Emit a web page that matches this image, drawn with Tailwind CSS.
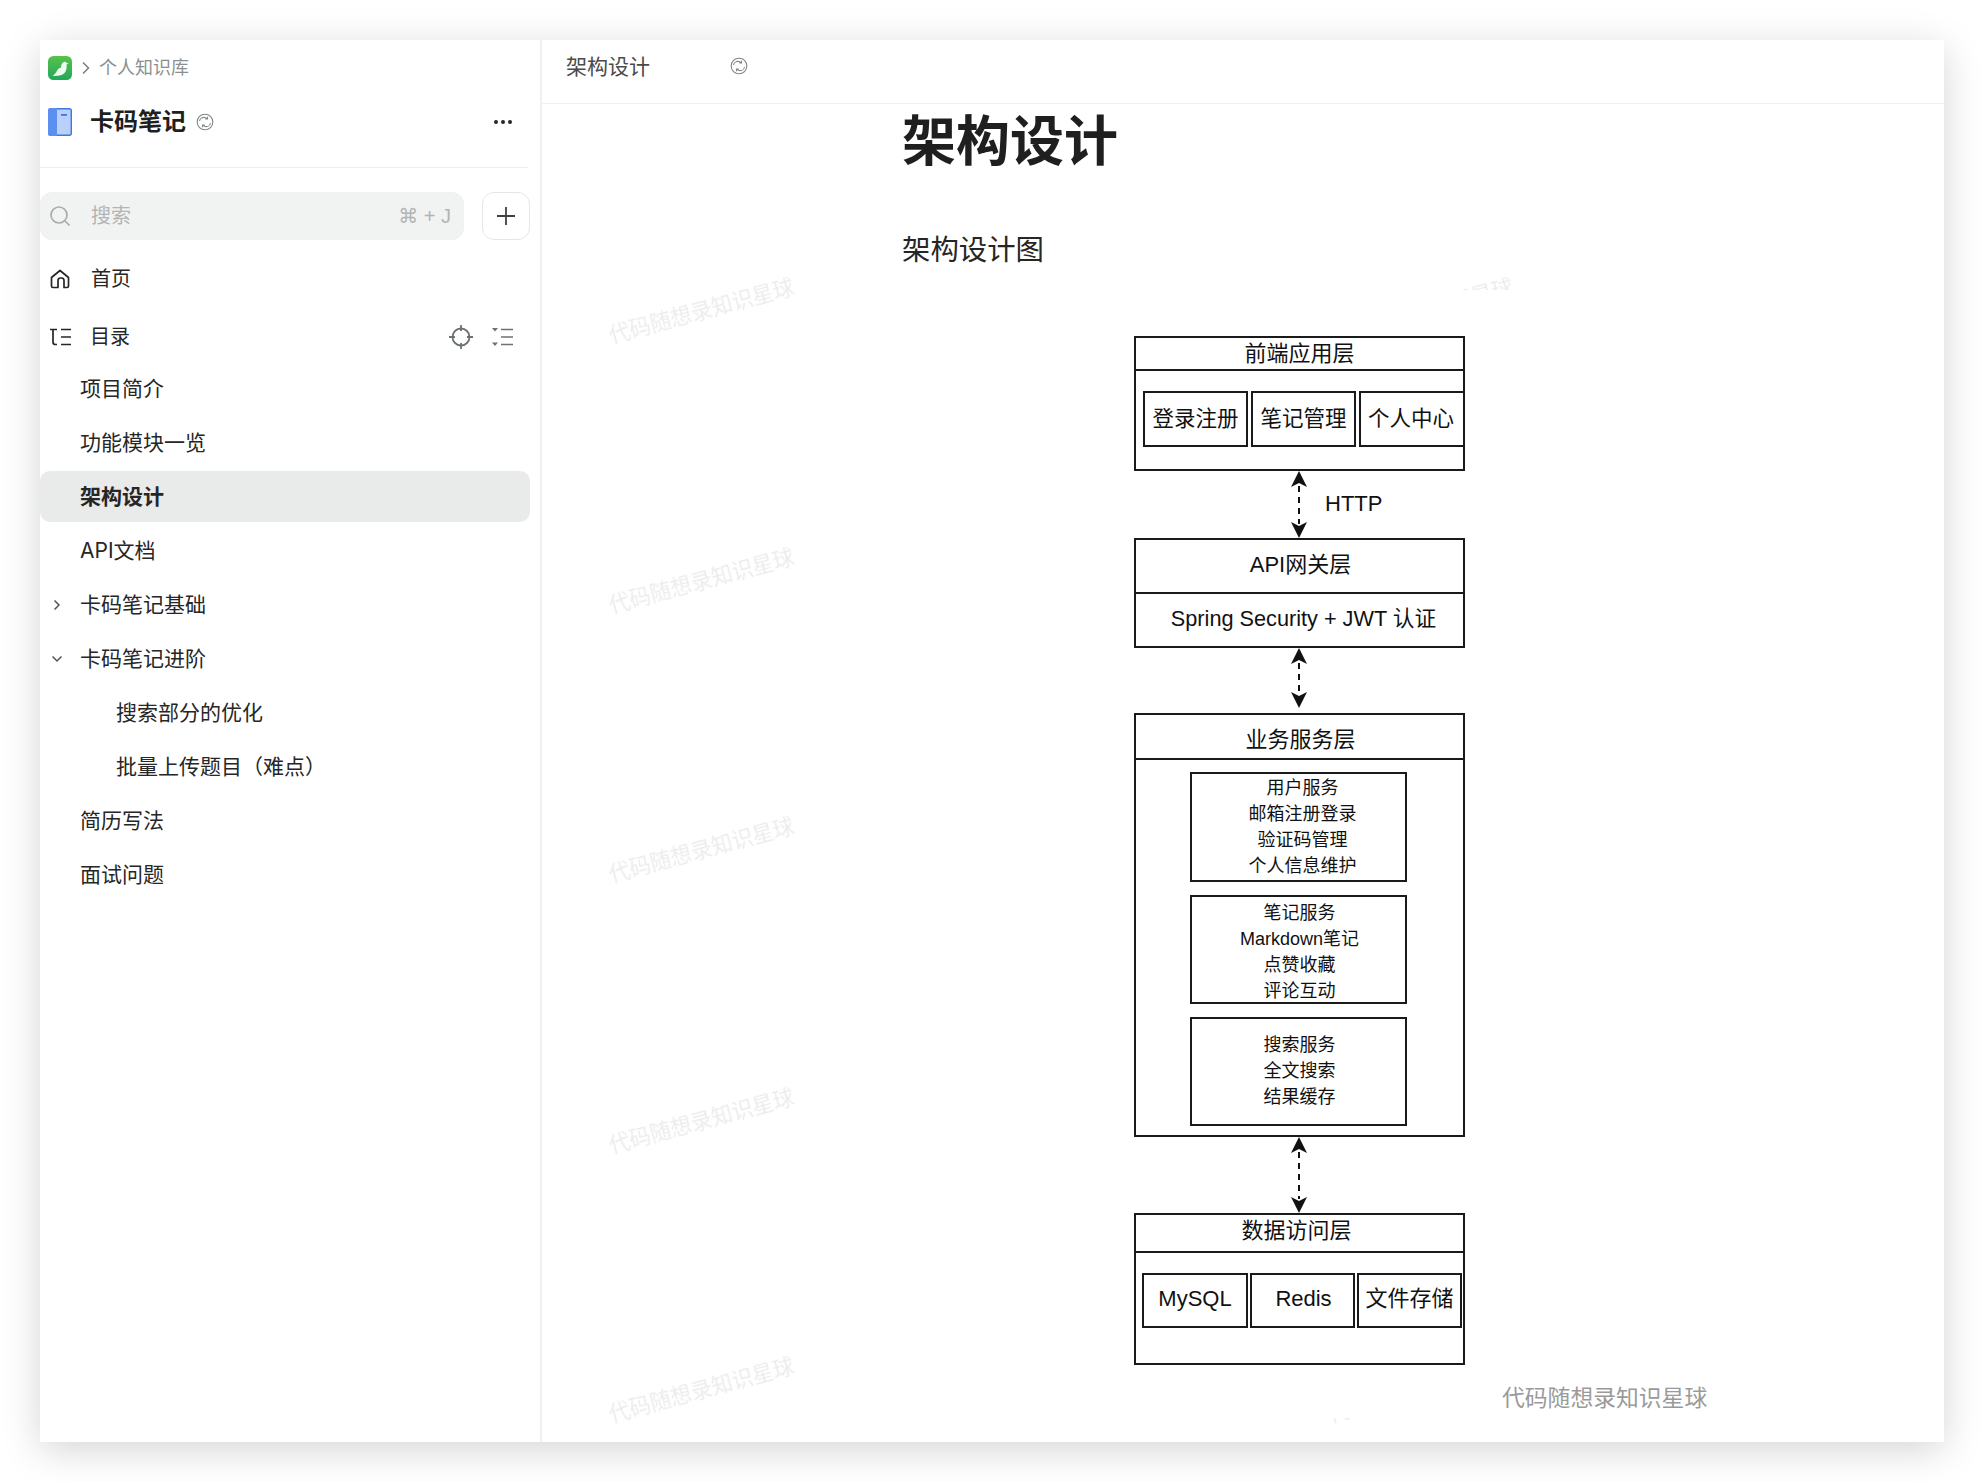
<!DOCTYPE html>
<html lang="zh-CN">
<head>
<meta charset="utf-8">
<title>架构设计</title>
<script src="https://cdn.jsdelivr.net/npm/@tailwindcss/browser@4"></script>
</head>
<body class="bg-white">
<div class="w-[1984px] h-[1482px] overflow-hidden p-[40px] pb-[40px] bg-white font-['Inter','Noto_Sans_CJK_SC',sans-serif] text-[#262626]">
  <div class="relative w-[1904px] h-[1402px] flex bg-white shadow-[0_8px_36px_rgba(0,0,0,0.17)]">
    <!-- sidebar -->
    <aside class="w-[502px] shrink-0 h-full border-r-2 border-[#f0f0f0] bg-white flex flex-col">
      <div class="h-[24px] mt-[16px] ml-[8px] flex items-center">
        <svg class="w-[24px] h-[24px]" viewBox="0 0 24 24">
          <defs><linearGradient id="g" x1="0" y1="0" x2="0" y2="1"><stop offset="0" stop-color="#58c24a"/><stop offset="1" stop-color="#22a75a"/></linearGradient></defs>
          <rect width="24" height="24" rx="5.500" fill="url(#g)"/>
          <path d="M4.500 20c2-1.200 3.200-3 4.500-5.300 1-1.800 2.200-2.700 4-3.200 0-2.500 1-4.700 3-5.500 1-.4 1.900 0 2.200.8l2.300.5-2 1.100c.6 3.500-.2 7-2.500 9.200-2.700 2.400-7.500 2.600-11.500 2.400z" fill="#eefbf0"/>
        </svg>
        <svg class="w-[10px] h-[14px] ml-[9px]" viewBox="0 0 10 14" fill="none" stroke="#7c7c7c" stroke-width="1.500"><path d="M2 1.500 7.500 7 2 12.500"/></svg>
        <span class="ml-[8px] text-[18px] leading-[24px] text-[#8a8f8d]">个人知识库</span>
      </div>
      <div class="h-[28px] mt-[28px] ml-[8px] mr-[27px] flex items-center">
        <svg class="w-[24px] h-[28px]" viewBox="0 0 24 28">
          <rect x=".7" y=".7" width="22.600" height="26.600" rx="2" fill="#b8d0fb" stroke="#3f78d8" stroke-width="1.400"/>
          <path d="M2.500 0h6.500v28H2.500A2.500 2.500 0 0 1 0 25.500v-23A2.500 2.500 0 0 1 2.500 0z" fill="#5b8ff0"/>
          <rect x="13" y="6" width="6" height="1.800" fill="#3f78d8"/>
        </svg>
        <span class="ml-[18px] text-[24px] leading-[28px] font-bold text-[#1f1f1f]">卡码笔记</span>
        <svg class="w-[18px] h-[18px] ml-[10px]" viewBox="0 0 18 18" fill="none" stroke="#7f8584" stroke-width="1.100"><circle cx="9" cy="9" r="7.800"/><path d="M3.500 8C4 5.500 6.500 4 9 4.500l2.500 1.500M11.500 3.800V6H9.300M14.500 10c-.5 2.500-3 4-5.500 3.500L6.500 12M6.500 14.200V12h2.200"/></svg>
        <svg class="w-[20px] h-[6px] ml-auto" viewBox="0 0 20 6" fill="#262626"><circle cx="3" cy="3" r="2"/><circle cx="10" cy="3" r="2"/><circle cx="17" cy="3" r="2"/></svg>
      </div>
      <div class="h-[1px] bg-[#efefef] mt-[31px] mr-[12px]"></div>
      <div class="mt-[24px] flex gap-[18px] items-center">
        <div class="w-[424px] h-[48px] rounded-[12px] bg-[#f1f2f2] flex items-center pl-[9px] pr-[13px]">
          <svg class="w-[22px] h-[22px]" viewBox="0 0 22 22" fill="none" stroke="#a9adac" stroke-width="1.700"><circle cx="10" cy="10" r="8"/><path d="m16 16 4.500 4.500"/></svg>
          <span class="ml-[20px] text-[20px] text-[#b2b5b4]">搜索</span>
          <span class="ml-auto text-[20px] text-[#b2b5b4] font-['Liberation_Sans','DejaVu_Sans',sans-serif]">⌘ + J</span>
        </div>
        <div class="w-[48px] h-[48px] rounded-[12px] border border-[#e6e6e6] flex items-center justify-center">
          <svg class="w-[20px] h-[20px]" viewBox="0 0 20 20" stroke="#404040" stroke-width="1.800"><path d="M10 1v18M1 10h18"/></svg>
        </div>
      </div>
      <div class="h-[40px] mt-[19px] flex items-center pl-[10px]">
        <svg class="w-[20px] h-[20px]" viewBox="0 0 20 20" fill="none" stroke="#262626" stroke-width="1.700" stroke-linejoin="round"><path d="M1.500 8.500 10 1.500l8.500 7v8.500a1.500 1.500 0 0 1-1.500 1.500h-3V11.500a2.500 2.500 0 0 0-2.500-2.500h-1A2.500 2.500 0 0 0 8 11.500v7H3A1.500 1.500 0 0 1 1.500 17z"/></svg>
        <span class="ml-[21px] text-[20px] leading-[40px]">首页</span>
      </div>
      <div class="h-[40px] mt-[18px] flex items-center pl-[10px] pr-[27px]">
        <svg class="w-[21px] h-[18px]" viewBox="0 0 21 18" fill="none" stroke="#262626" stroke-width="1.700"><path d="M0 1.500h7M3 1.500V14a2.500 2.500 0 0 0 2.500 2.500H7M11 1.500h10M11 9h10M11 16.500h10"/></svg>
        <span class="ml-[19px] text-[20px] leading-[40px]">目录</span>
        <svg class="w-[24px] h-[24px] ml-auto -mt-[1px]" viewBox="0 0 24 24" fill="none" stroke="#6b7270" stroke-width="1.800"><circle cx="12" cy="12" r="8.500"/><path d="M12 0v6M12 18v6M0 12h6M18 12h6"/></svg>
        <svg class="w-[21px] h-[18px] ml-[19px] -mt-[1px]" viewBox="0 0 21 18" fill="none" stroke="#6b7270" stroke-width="1.700"><path d="M9 1.500h12M9 9h12M9 16.500h12"/><path d="M0 0h6L3 3.500zM0 14.500h6L3 18z" fill="#6b7270" stroke="none"/></svg>
      </div>
      <nav class="mt-[6px] flex flex-col gap-[3px] text-[21px] leading-[51px]">
        <div class="h-[51px] pl-[40px]">项目简介</div>
        <div class="h-[51px] pl-[40px]">功能模块一览</div>
        <div class="h-[51px] pl-[40px] w-[490px] rounded-[10px] bg-[#e9eaea] font-bold">架构设计</div>
        <div class="h-[51px] pl-[40px]">API文档</div>
        <div class="h-[51px] flex items-center pl-[13px]">
          <svg class="w-[8px] h-[12px]" viewBox="0 0 8 12" fill="none" stroke="#555" stroke-width="1.500"><path d="m1.500 1.500 4.500 4.500-4.500 4.500"/></svg>
          <span class="ml-[19px]">卡码笔记基础</span>
        </div>
        <div class="h-[51px] flex items-center pl-[11px]">
          <svg class="w-[12px] h-[8px]" viewBox="0 0 12 8" fill="none" stroke="#555" stroke-width="1.500"><path d="m1.500 1.500 4.500 4.500 4.500-4.500"/></svg>
          <span class="ml-[17px]">卡码笔记进阶</span>
        </div>
        <div class="h-[51px] pl-[76px]">搜索部分的优化</div>
        <div class="h-[51px] pl-[76px]">批量上传题目（难点）</div>
        <div class="h-[51px] pl-[40px]">简历写法</div>
        <div class="h-[51px] pl-[40px]">面试问题</div>
      </nav>
    </aside>
    <!-- main -->
    <main class="relative flex-1 h-full overflow-hidden bg-white">
      <header class="h-[64px] border-b border-[#f0f0f0] flex items-center pl-[24px] pb-[10px]">
        <span class="text-[21px] leading-[28px] text-[#4a4a4a]">架构设计</span>
        <svg class="w-[18px] h-[18px] ml-[80px] -mt-[2px]" viewBox="0 0 18 18" fill="none" stroke="#7f8584" stroke-width="1.100"><circle cx="9" cy="9" r="7.800"/><path d="M3.500 8C4 5.500 6.500 4 9 4.500l2.500 1.500M11.500 3.800V6H9.300M14.500 10c-.5 2.500-3 4-5.500 3.500L6.500 12M6.500 14.200V12h2.200"/></svg>
      </header>
      <!-- watermarks -->
      <span class="absolute left-[64px] top-[257px] w-[186px] text-center whitespace-nowrap text-[21.200px] leading-[28px] text-[#ececec] -rotate-[15deg] blur-[0.4px]">代码随想录知识星球</span>
      <span class="absolute left-[64px] top-[527px] w-[186px] text-center whitespace-nowrap text-[21.200px] leading-[28px] text-[#ececec] -rotate-[15deg] blur-[0.4px]">代码随想录知识星球</span>
      <span class="absolute left-[64px] top-[796px] w-[186px] text-center whitespace-nowrap text-[21.200px] leading-[28px] text-[#ececec] -rotate-[15deg] blur-[0.4px]">代码随想录知识星球</span>
      <span class="absolute left-[64px] top-[1067px] w-[186px] text-center whitespace-nowrap text-[21.200px] leading-[28px] text-[#ececec] -rotate-[15deg] blur-[0.4px]">代码随想录知识星球</span>
      <span class="absolute left-[64px] top-[1336px] w-[186px] text-center whitespace-nowrap text-[21.200px] leading-[28px] text-[#ececec] -rotate-[15deg] blur-[0.4px]">代码随想录知识星球</span>
      <span class="absolute left-[783px] top-[257px] w-[186px] text-center whitespace-nowrap text-[21.200px] leading-[28px] text-[#ececec] -rotate-[15deg] blur-[0.4px]">代码随想录知识星球</span>
      <span class="absolute left-[783px] top-[1336px] w-[186px] text-center whitespace-nowrap text-[21.200px] leading-[28px] text-[#ececec] -rotate-[15deg] blur-[0.4px]">代码随想录知识星球</span>

      <div class="relative pl-[360px]">
        <h1 class="h-[72px] mt-[2px] text-[54px] leading-[72px] font-bold text-[#1f1f1f]">架构设计</h1>
        <p class="mt-[52px] text-[28.400px] leading-[40px] text-[#262626]">架构设计图</p>
        <!-- picture -->
        <div class="mt-[20px] ml-[197px] w-[620px] h-[1128px] bg-white pt-[46px] pl-[35px] font-['Liberation_Sans','Noto_Sans_CJK_SC',sans-serif] text-[#111] text-center">
          <div class="w-[331px]">
            <div class="h-[135px] border-2 border-[#1a1a1a] flex flex-col">
              <div class="h-[33px] border-b-2 border-[#1a1a1a] text-[22px] leading-[31px]">前端应用层</div>
              <div class="mt-[20px] pl-[7px] flex gap-[3px] text-[21.500px] leading-[52px]">
                <div class="w-[105px] h-[56px] border-2 border-[#1a1a1a]">登录注册</div>
                <div class="w-[105px] h-[56px] border-2 border-[#1a1a1a]">笔记管理</div>
                <div class="w-[104px] h-[56px] border-2 border-[#1a1a1a] border-r-0 pr-[2px]">个人中心</div>
              </div>
            </div>
            <div class="h-[67px] flex items-center">
              <svg class="w-[20px] h-[67px] ml-[155px]" viewBox="0 0 20 67"><path d="M10 15v38" stroke="#111" stroke-width="2" stroke-dasharray="6 5"/><path d="M10 0 18 16 10 12 2 16zM10 67 18 51 10 55 2 51z" fill="#111"/></svg>
              <span class="ml-[16px] text-[22px] leading-[28px] -mt-[2px]">HTTP</span>
            </div>
            <div class="h-[110px] border-2 border-[#1a1a1a]">
              <div class="h-[54px] border-b-2 border-[#1a1a1a] text-[22px] leading-[50px] pl-[2px]">API网关层</div>
              <div class="text-[21.700px] leading-[50px] pl-[8px]">Spring Security + JWT 认证</div>
            </div>
            <div class="h-[65px] flex">
              <svg class="w-[20px] h-[65px] ml-[155px]" viewBox="0 0 20 65"><path d="M10 15v32" stroke="#111" stroke-width="2" stroke-dasharray="6 5"/><path d="M10 0 18 16 10 12 2 16zM10 60 18 44 10 48 2 44z" fill="#111"/></svg>
            </div>
            <div class="h-[424px] border-2 border-[#1a1a1a]">
              <div class="h-[45px] border-b-2 border-[#1a1a1a] text-[22px] leading-[50px] pl-[2px]">业务服务层</div>
              <div class="ml-[54px] w-[217px] mt-[12px] flex flex-col gap-[13px] text-[18px] leading-[26px]">
                <div class="h-[110px] border-2 border-[#1a1a1a] pl-[8px] pt-[1px]">用户服务<br>邮箱注册登录<br>验证码管理<br>个人信息维护</div>
                <div class="h-[109px] border-2 border-[#1a1a1a] pl-[2px] pt-[3px]">笔记服务<br>Markdown笔记<br>点赞收藏<br>评论互动</div>
                <div class="h-[109px] border-2 border-[#1a1a1a] pl-[2px] pt-[13px]">搜索服务<br>全文搜索<br>结果缓存</div>
              </div>
            </div>
            <div class="h-[76px] flex">
              <svg class="w-[20px] h-[76px] ml-[155px]" viewBox="0 0 20 76"><path d="M10 15v47" stroke="#111" stroke-width="2" stroke-dasharray="6 5"/><path d="M10 0 18 16 10 12 2 16zM10 76 18 60 10 64 2 60z" fill="#111"/></svg>
            </div>
            <div class="h-[152px] border-2 border-[#1a1a1a]">
              <div class="h-[38px] border-b-2 border-[#1a1a1a] text-[22px] leading-[32px] pr-[6px]">数据访问层</div>
              <div class="mt-[20px] pl-[6px] flex gap-[2px] text-[22px] leading-[48px]">
                <div class="w-[106px] h-[55px] border-2 border-[#1a1a1a]">MySQL</div>
                <div class="w-[105px] h-[55px] border-2 border-[#1a1a1a] pl-[2px]">Redis</div>
                <div class="w-[105px] h-[55px] border-2 border-[#1a1a1a]">文件存储</div>
              </div>
            </div>
          </div>
          <div class="mt-[20px] ml-[368px] w-[210px] text-left whitespace-nowrap text-[22.800px] leading-[26px] text-[#9a9a9a]">代码随想录知识星球</div>
        </div>
      </div>
    </main>
  </div>
</div>
</body>
</html>
